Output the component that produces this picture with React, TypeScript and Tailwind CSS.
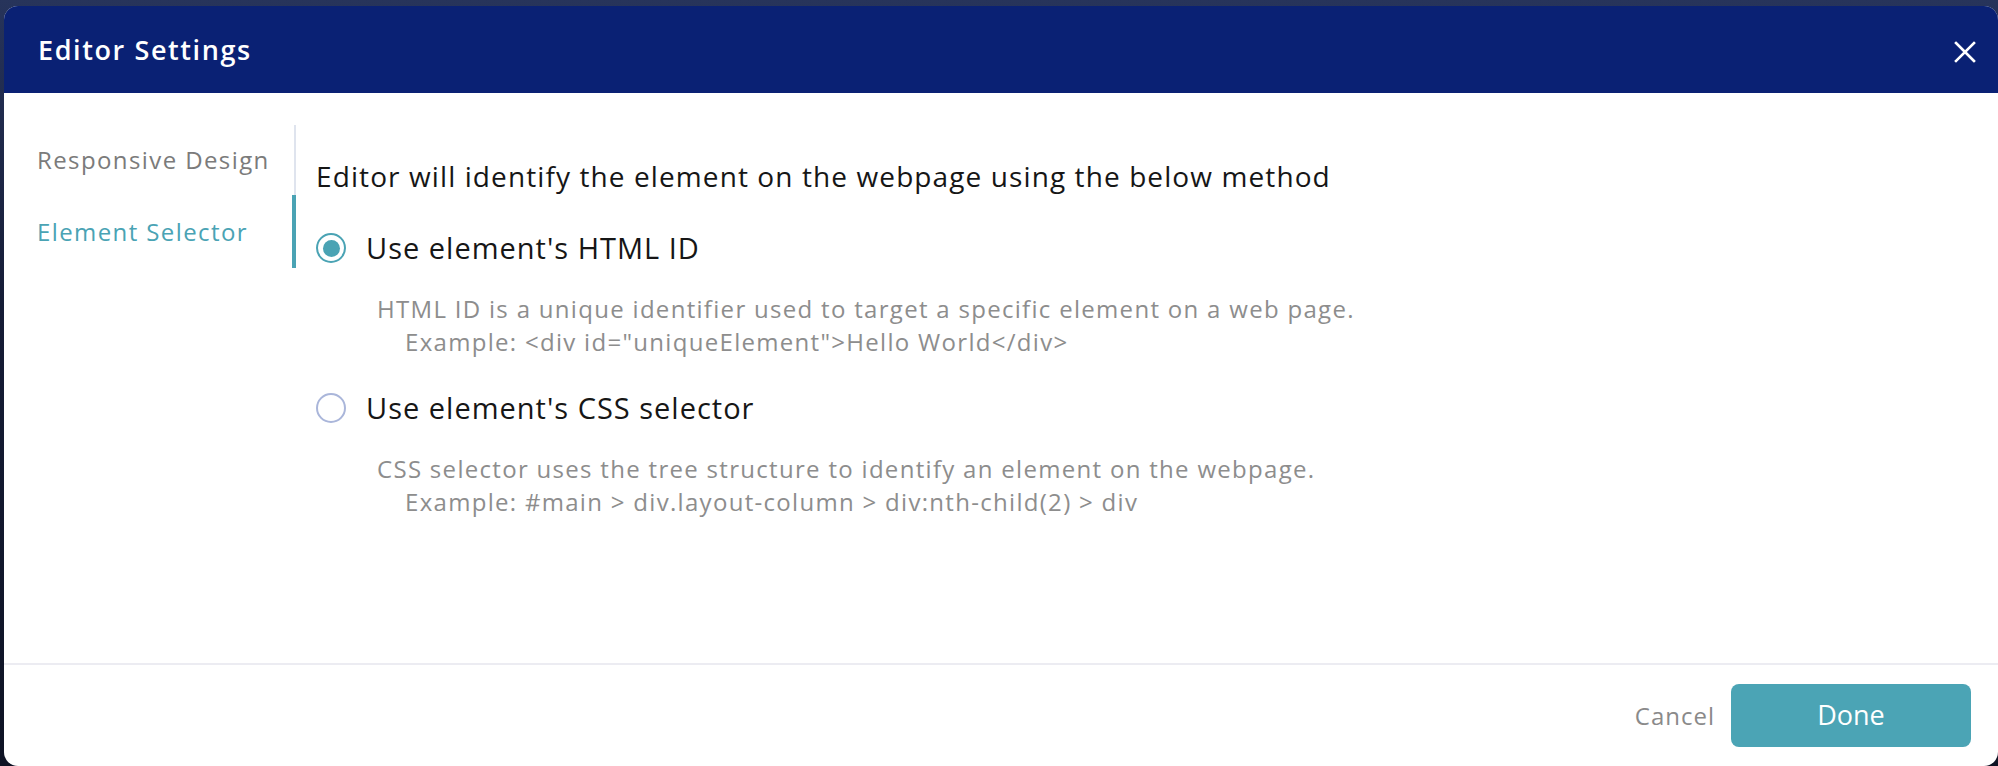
import React from "react";

const font = { fontFamily: "'Open Sans', 'Noto Sans', sans-serif" };

function Radio({ checked }: { checked: boolean }) {
  return checked ? (
    <span className="flex h-[30px] w-[30px] shrink-0 items-center justify-center rounded-full border-2 border-[#4aa3b4]">
      <span className="h-[17px] w-[17px] rounded-full bg-[#4aa3b4]" />
    </span>
  ) : (
    <span className="h-[30px] w-[30px] shrink-0 rounded-full border-2 border-[#aab6da]" />
  );
}

export default function App() {
  return (
    <div
      className="h-[766px] w-[1998px] overflow-hidden bg-[linear-gradient(180deg,#27345b_0%,#151c36_40%,#0e1324_100%)] pl-[4px] pt-[6px]"
      style={font}
    >
      <div className="flex h-[760px] w-[1994px] flex-col overflow-hidden rounded-[14px] bg-white">
        {/* Header */}
        <div className="flex h-[87px] shrink-0 items-center justify-between bg-[#0a2174] pl-[34px] pr-[22px]">
          <h1 className="text-[27px] font-semibold leading-none tracking-[1.6px] text-white">Editor Settings</h1>
          <svg width="22" height="22" viewBox="0 0 22 22" className="mt-[4px]">
            <path d="M2 2 L20 20 M20 2 L2 20" stroke="white" strokeWidth="2.6" strokeLinecap="square" />
          </svg>
        </div>

        {/* Body */}
        <div className="flex flex-1">
          <div className="w-[292px] shrink-0 pt-[32px]">
            <ul className="border-r-2 border-[#dfe4ee]">
              <li className="flex h-[70px] items-center pl-[33px] text-[24px] tracking-[1.4px] text-[#7b7b7b]">
                Responsive Design
              </li>
              <li className="-mr-[2px] flex h-[73px] items-center border-r-4 border-[#4aa3b4] pl-[33px] text-[24px] tracking-[1.4px] text-[#4aa3b4]">
                Element Selector
              </li>
            </ul>
          </div>
          <div className="flex-1 pl-[20px] pt-[63px]">
            <p className="text-[28px] leading-[40px] tracking-[1.1px] text-[#161616]">
              Editor will identify the element on the webpage using the below method
            </p>

            <div className="mt-[32px] flex h-[40px] items-center gap-[20px]">
              <Radio checked />
              <span className="text-[29px] tracking-[1px] text-[#161616]">Use element's HTML ID</span>
            </div>
            <div className="mt-[24px] pl-[61px] text-[24px] leading-[33px] tracking-[1.3px] text-[#8d8d8d]">
              <div>HTML ID is a unique identifier used to target a specific element on a web page.</div>
              <div className="pl-[28px]">Example: &lt;div id="uniqueElement"&gt;Hello World&lt;/div&gt;</div>
            </div>

            <div className="mt-[30px] flex h-[40px] items-center gap-[20px]">
              <Radio checked={false} />
              <span className="text-[29px] tracking-[1px] text-[#161616]">Use element's CSS selector</span>
            </div>
            <div className="mt-[24px] pl-[61px] text-[24px] leading-[33px] tracking-[1.3px] text-[#8d8d8d]">
              <div>CSS selector uses the tree structure to identify an element on the webpage.</div>
              <div className="pl-[28px]">Example: #main &gt; div.layout-column &gt; div:nth-child(2) &gt; div</div>
            </div>
          </div>
        </div>

        {/* Footer */}
        <div className="flex h-[103px] shrink-0 items-center justify-end gap-[16px] border-t-2 border-[#ececf2] pr-[27px]">
          <button className="text-[24px] tracking-[1px] text-[#8a8a8a]">Cancel</button>
          <button className="h-[63px] w-[240px] rounded-[8px] bg-[#4ba4b5] text-[27px] text-white">Done</button>
        </div>
      </div>
    </div>
  );
}
